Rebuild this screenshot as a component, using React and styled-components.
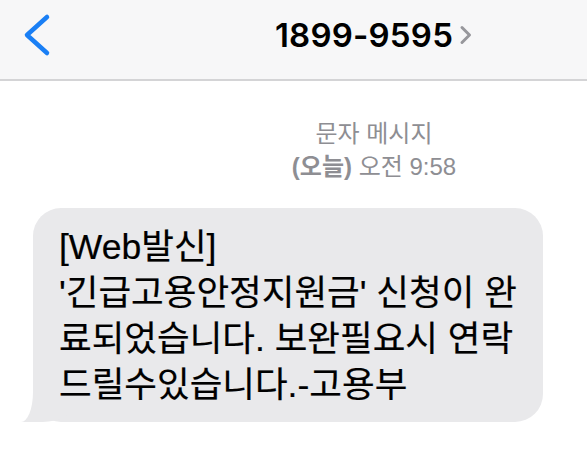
import styled, { createGlobalStyle } from "styled-components";

const GlobalStyle = createGlobalStyle`
  body {
    margin: 0;
    background: #ffffff;
    font-family: "Liberation Sans", "Noto Sans CJK KR", sans-serif;
  }
`;

const Screen = styled.div`
  width: 587px;
  height: 453px;
  overflow: hidden;
  display: flex;
  flex-direction: column;
  background: #ffffff;
`;

const Header = styled.div`
  height: 70px;
  padding-bottom: 9px;
  display: grid;
  grid-template-columns: 161px 1fr;
  align-items: center;
  background: #f7f7f8;
  border-bottom: 2px solid #d4d4d6;
`;

const BackButton = styled.div`
  padding-left: 23px;
  display: flex;
  align-items: center;
`;

const TitleGroup = styled.div`
  display: flex;
  align-items: center;
  justify-content: center;
  gap: 6px;
`;

const Title = styled.div`
  font-family: Inter, "Liberation Sans", sans-serif;
  font-weight: 600;
  font-size: 33px;
  color: #000;
  letter-spacing: 0.2px;
`;

const Meta = styled.div`
  margin-top: 36px;
  padding-left: 161px;
  display: flex;
  flex-direction: column;
  align-items: center;
  font-family: "Liberation Sans", "Noto Sans CJK KR", sans-serif;
  font-size: 24px;
  line-height: 33px;
  color: #8e8e93;
`;

const Strong = styled.span`
  font-weight: 600;
`;

const Thread = styled.div`
  margin-top: 25px;
  padding-left: 33px;
  display: flex;
`;

const Bubble = styled.div`
  position: relative;
  width: 510px;
  box-sizing: border-box;
  padding: 16px 20px 14px 26px;
  background: #e9e9eb;
  border-radius: 28px;
  color: #000;
  font-family: "Liberation Sans", "Noto Sans CJK KR", sans-serif;
  font-size: 35.5px;
  line-height: 46px;
  -webkit-text-stroke: 0.2px #000;

  &::before {
    content: "";
    position: absolute;
    left: -12px;
    bottom: 0;
    width: 46px;
    height: 36px;
    background: #e9e9eb;
    border-bottom-right-radius: 30px 7px;
  }

  &::after {
    content: "";
    position: absolute;
    left: -22px;
    bottom: 0;
    width: 22px;
    height: 36px;
    background: #ffffff;
    border-bottom-right-radius: 12px 30px;
  }
`;

const Line = styled.div`
  position: relative;
  z-index: 1;
  white-space: nowrap;
`;

function ChevronLeft() {
  return (
    <svg width="30" height="44" viewBox="0 0 30 44">
      <path
        d="M24 4 L4 22 L24 40"
        fill="none"
        stroke="#1a7ff5"
        strokeWidth="4.5"
        strokeLinecap="round"
        strokeLinejoin="round"
      />
    </svg>
  );
}

function ChevronSmall() {
  return (
    <svg width="14" height="20" viewBox="0 0 14 20">
      <path
        d="M3 2.5 L10.5 10 L3 17.5"
        fill="none"
        stroke="#97979c"
        strokeWidth="3"
        strokeLinecap="round"
        strokeLinejoin="round"
      />
    </svg>
  );
}

export default function App() {
  return (
    <Screen>
      <GlobalStyle />
      <Header>
        <BackButton>
          <ChevronLeft />
        </BackButton>
        <TitleGroup>
          <Title>1899-9595</Title>
          <ChevronSmall />
        </TitleGroup>
      </Header>

      <Meta>
        <div>문자 메시지</div>
        <div>
          <Strong>(오늘)</Strong> 오전 9:58
        </div>
      </Meta>

      <Thread>
        <Bubble>
          <Line>[Web발신]</Line>
          <Line>'긴급고용안정지원금' 신청이 완</Line>
          <Line>료되었습니다. 보완필요시 연락</Line>
          <Line>드릴수있습니다.-고용부</Line>
        </Bubble>
      </Thread>
    </Screen>
  );
}
